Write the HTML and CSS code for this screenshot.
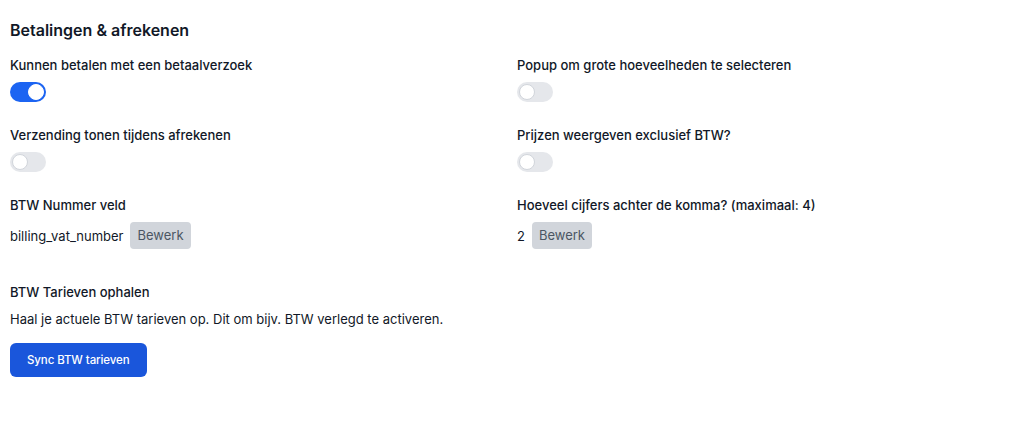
FILE: index.html
```html
<!DOCTYPE html>
<html lang="nl">
<head>
<meta charset="utf-8">
<title>Betalingen &amp; afrekenen</title>
<link rel="stylesheet" href="styles.css">
</head>
<body>
<div class="page">
  <h2 class="title">Betalingen &amp; afrekenen</h2>
  <div class="grid">
    <div class="field">
      <div class="label">Kunnen betalen met een betaalverzoek</div>
      <span class="toggle on"></span>
    </div>
    <div class="field">
      <div class="label">Popup om grote hoeveelheden te selecteren</div>
      <span class="toggle"></span>
    </div>
    <div class="field">
      <div class="label">Verzending tonen tijdens afrekenen</div>
      <span class="toggle"></span>
    </div>
    <div class="field">
      <div class="label">Prijzen weergeven exclusief BTW?</div>
      <span class="toggle"></span>
    </div>
    <div class="field">
      <div class="label">BTW Nummer veld</div>
      <div class="value-row"><span class="value">billing_vat_number</span><button class="edit">Bewerk</button></div>
    </div>
    <div class="field">
      <div class="label">Hoeveel cijfers achter de komma? (maximaal: 4)</div>
      <div class="value-row"><span class="value">2</span><button class="edit">Bewerk</button></div>
    </div>
  </div>
  <div class="sync">
    <div class="label">BTW Tarieven ophalen</div>
    <p class="desc">Haal je actuele BTW tarieven op. Dit om bijv. BTW verlegd te activeren.</p>
    <button class="primary">Sync BTW tarieven</button>
  </div>
</div>
</body>
</html>
```
FILE: styles.css
```css
* { box-sizing: border-box; }
html, body { margin: 0; padding: 0; background: #fff; }
body {
  font-family: Inter, "Noto Sans", sans-serif;
  color: #111827;
}
.page { padding: 20px 10px 0 10px; }
.title {
  margin: 0 0 15px 0;
  font-size: 16px;
  line-height: 20px;
  font-weight: 600;
  color: #111827;
}
.grid {
  display: grid;
  grid-template-columns: 1fr 1fr;
  column-gap: 10px;
  row-gap: 23px;
}
.field { display: flex; flex-direction: column; align-items: flex-start; }
.label {
  font-size: 13px;
  line-height: 20px;
  font-weight: 500;
  color: #111827;
  margin-bottom: 7px;
}
.toggle {
  position: relative;
  display: block;
  width: 36px;
  height: 20px;
  border-radius: 10px;
  background: #e5e7eb;
}
.toggle::after {
  content: "";
  position: absolute;
  top: 2px;
  left: 2px;
  width: 16px;
  height: 16px;
  border-radius: 50%;
  background: #fff;
  border: 1px solid #d1d5db;
  box-sizing: border-box;
}
.toggle.on { background: #1c64f2; }
.toggle.on::after { left: 18px; border-color: #fff; }
.value-row { display: flex; align-items: center; gap: 7px; }
.value { font-size: 13px; line-height: 20px; color: #111827; }
.edit {
  font-family: inherit;
  font-size: 13px;
  line-height: 27px;
  color: #4b5563;
  background: #d1d5db;
  border: 0;
  border-radius: 4px;
  padding: 0 7px;
  height: 27px;
}
.sync { margin-top: 33px; }
.desc {
  margin: 0 0 14px 0;
  font-size: 13px;
  line-height: 20px;
  color: #111827;
}
.primary {
  font-family: inherit;
  font-size: 11.5px;
  font-weight: 500;
  letter-spacing: -0.1px;
  line-height: 34px;
  color: #fff;
  background: #1a56db;
  border: 0;
  border-radius: 6px;
  padding: 0 17px;
  height: 34px;
}
```
